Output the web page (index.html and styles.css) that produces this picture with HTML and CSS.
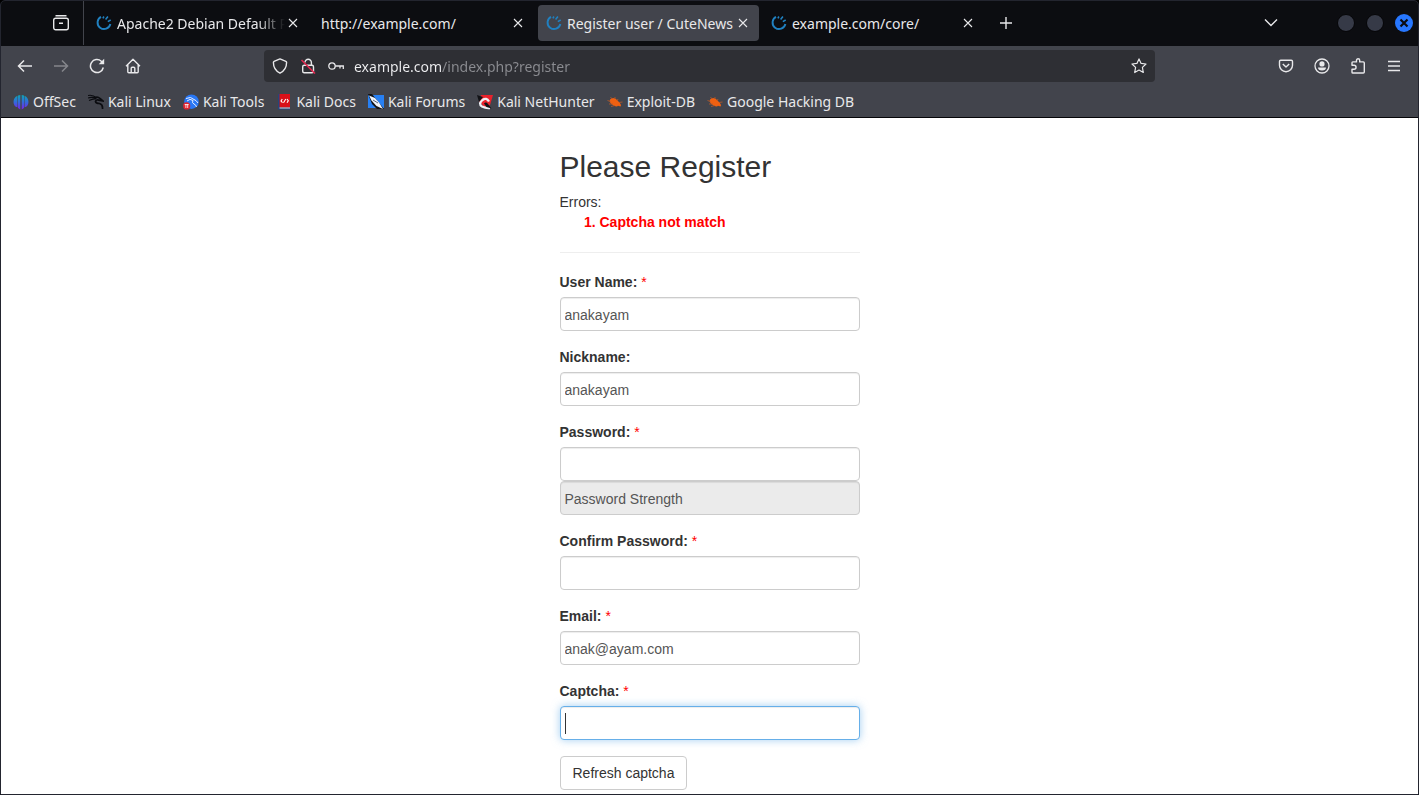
FILE: index.html
```html
<!DOCTYPE html>
<html lang="en">
<head>
  <meta charset="UTF-8">
  <meta name="viewport" content="width=device-width, initial-scale=1.0">
  <title>Register user / CuteNews</title>
  <link rel="stylesheet" href="styles.css">
</head>
<body>
  <svg class="sprites" aria-hidden="true">
    <symbol id="swirl" viewBox="0 0 16 16">
      <path d="M5 1.800A6.500 6.500 0 1 0 14.400 9" fill="none" stroke="#2080c0" stroke-width="1.900"/>
      <path d="M6.900 3.300l1-1.800M9.600 4.500l2.300-2.900M11.800 6.600l2.900-1.600" fill="none" stroke="#2080c0" stroke-width="1.600"/>
    </symbol>
    <symbol id="close" viewBox="0 0 16 16">
      <path d="M4 4l8 8M12 4l-8 8" fill="none" stroke="currentColor" stroke-width="1.1"/>
    </symbol>
    <symbol id="bug" viewBox="0 0 16 16">
      <path d="M3 5.500Q6 2.500 9.500 5.500L12 8Q15 11 13.500 12.500L11 11.800Q10 13.500 6.500 11.500Q1.500 8.500 3 5.500Z" fill="#f06010"/>
      <path d="M.5 6.500l3 1M2 10l4 0M4 12.500l4-1M3.500 3l1.500 2M8 3l0 2M11 5l-1 2M12 8.500l3.500-.5" stroke="#bd5a28" stroke-width=".8"/>
    </symbol>
  </svg>

  <div class="window">
    <header class="browser">
      <div class="tab-bar">
        <button class="icon-btn view-btn" aria-label="Firefox View">
          <svg width="18" height="18" viewBox="0 0 18 18" fill="none" stroke="currentColor" stroke-width="1.4"><path d="M3.500 1.700h11"/><rect x="1.700" y="4.200" width="14.600" height="11.600" rx="2"/><path d="M7 9.300h4"/></svg>
        </button>
        <div class="tabs">
          <div class="tab">
            <svg class="favicon"><use href="#swirl"/></svg>
            <button class="tab-title faded">Apache2 Debian Default P</button>
            <button class="tab-close" aria-label="Close tab"><svg><use href="#close"/></svg></button>
          </div>
          <div class="tab">
            <button class="tab-title">http://example.com/</button>
            <button class="tab-close" aria-label="Close tab"><svg><use href="#close"/></svg></button>
          </div>
          <div class="tab active">
            <svg class="favicon"><use href="#swirl"/></svg>
            <button class="tab-title">Register user / CuteNews</button>
            <button class="tab-close" aria-label="Close tab"><svg><use href="#close"/></svg></button>
          </div>
          <div class="tab">
            <svg class="favicon"><use href="#swirl"/></svg>
            <button class="tab-title">example.com/core/</button>
            <button class="tab-close" aria-label="Close tab"><svg><use href="#close"/></svg></button>
          </div>
        </div>
        <button class="icon-btn" aria-label="New tab">
          <svg width="16" height="16" viewBox="0 0 16 16" stroke="currentColor" stroke-width="1.4"><path d="M8 2v12M2 8h12"/></svg>
        </button>
        <button class="icon-btn list-btn" aria-label="List all tabs">
          <svg width="16" height="16" viewBox="0 0 16 16" fill="none" stroke="currentColor" stroke-width="1.4"><path d="M2 4.500L8 10.500 14 4.500"/></svg>
        </button>
        <div class="window-controls">
          <button class="control" aria-label="Minimize"></button>
          <button class="control" aria-label="Maximize"></button>
          <button class="control control-close" aria-label="Close">
            <svg width="10" height="10" viewBox="0 0 10 10" stroke="#0c0d12" stroke-width="2.200"><path d="M1.500 1.500l7 7M8.500 1.500l-7 7"/></svg>
          </button>
        </div>
      </div>

      <div class="nav-bar">
        <div class="nav-group">
          <button class="icon-btn" aria-label="Back">
            <svg width="16" height="16" viewBox="0 0 16 16" fill="none" stroke="currentColor" stroke-width="1.500"><path d="M15 8H1.800M7 2.500L1.500 8 7 13.500"/></svg>
          </button>
          <button class="icon-btn dim" aria-label="Forward">
            <svg width="16" height="16" viewBox="0 0 16 16" fill="none" stroke="currentColor" stroke-width="1.500"><path d="M1 8h13.200M9 2.500L14.500 8 9 13.500"/></svg>
          </button>
          <button class="icon-btn" aria-label="Reload">
            <svg width="16" height="16" viewBox="0 0 16 16" fill="none" stroke="currentColor" stroke-width="1.500"><path d="M14.300 9.500A6.500 6.500 0 1 1 12.300 3.200L14 5"/><path d="M15.200 .8V6.300H9.700Z" fill="currentColor" stroke="none"/></svg>
          </button>
          <button class="icon-btn" aria-label="Home">
            <svg width="16" height="16" viewBox="0 0 16 16" fill="none" stroke="currentColor" stroke-width="1.400" stroke-linejoin="round"><path d="M1 8.300L8 1.300l7 7M2.800 7v6.700q0 1 1 1h8.400q1 0 1-1V7M6.200 14.500V10.200q0-1 1-1h1.600q1 0 1 1v4.300"/></svg>
          </button>
        </div>
        <div class="url-bar">
          <svg width="16" height="16" viewBox="0 0 16 16" fill="none" stroke="currentColor" stroke-width="1.400" stroke-linejoin="round"><path d="M8 .9L13.900 3.300q.7.300.7 1C14.600 9 12.300 13.100 8 15.200 3.700 13.100 1.400 9 1.400 4.300q0-.7.700-1Z"/></svg>
          <svg width="16" height="16" viewBox="0 0 16 16" fill="none" stroke="currentColor" stroke-width="1.400"><rect x="2.700" y="7.200" width="10.800" height="7.600" rx="1.500"/><path d="M5 4.500a3.200 3.200 0 0 1 6.400 0V7"/><path d="M1.500 2l13.500 13.500" stroke="#e22850" stroke-width="1.600"/></svg>
          <svg width="16" height="16" viewBox="0 0 16 16" fill="none" stroke="currentColor" stroke-width="1.300"><circle cx="4" cy="8" r="3.200"/><path d="M7.200 8H15.300v3M12 8v2.500"/></svg>
          <input class="url" type="text" aria-label="Address" value="example.com/index.php?register">
          <button class="star" aria-label="Bookmark this page">
            <svg width="16" height="16" viewBox="0 0 16 16" fill="none" stroke="currentColor" stroke-width="1.200" stroke-linejoin="round"><path d="M8 .9l2.100 4.500 4.900.6-3.600 3.400.9 5.100L8 12.100l-4.300 2.400.9-5.100L1 6l4.900-.6Z"/></svg>
          </button>
        </div>
        <div class="nav-group">
          <button class="icon-btn" aria-label="Save to Pocket">
            <svg width="16" height="16" viewBox="0 0 16 16" fill="none" stroke="currentColor" stroke-width="1.400" stroke-linejoin="round"><path d="M2.700 2.200h10.600q1.200 0 1.200 1.200V7.200a6.500 6.500 0 0 1-13 0V3.400q0-1.200 1.200-1.200Z"/><path d="M4.800 6L8 9.100 11.200 6"/></svg>
          </button>
          <button class="icon-btn" aria-label="Account">
            <svg width="16" height="16" viewBox="0 0 16 16"><circle cx="8" cy="8" r="7" fill="none" stroke="currentColor" stroke-width="1.300"/><circle cx="8" cy="5.900" r="2.600" fill="currentColor"/><path d="M4 9.500h8q0 3-4 3t-4-3Z" fill="currentColor"/></svg>
          </button>
          <button class="icon-btn" aria-label="Extensions">
            <svg width="16" height="16" viewBox="0 0 16 16" fill="none" stroke="currentColor" stroke-width="1.400" stroke-linejoin="round"><path d="M2 7.200V4.700q0-.8.800-.8H6.500V2.300a1.600 1.600 0 0 1 3.200 0V3.900h3.600q1 0 1 1V14q0 1-1 1H2.800q-.8 0-.8-.8V11.300H4a2 2 0 0 0 0-4.100Z"/></svg>
          </button>
          <button class="icon-btn" aria-label="Menu">
            <svg width="16" height="16" viewBox="0 0 16 16" stroke="currentColor" stroke-width="1.300"><path d="M2 3.500h12M2 8h12M2 12.500h12"/></svg>
          </button>
        </div>
      </div>

      <nav class="bookmarks">
        <a href="#">
          <svg viewBox="0 0 16 16"><defs><linearGradient id="offsec" x2="0" y2="1"><stop stop-color="#0ca5b4"/><stop offset=".5" stop-color="#3468dc"/><stop offset="1" stop-color="#7b20e8"/></linearGradient></defs><path d="M4.500 1.800V13.300C-.8 12 -.8 4 4.500 1.800ZM5 1.500L7.300 1V15.600L5 14ZM8.700 1l2.300.5V14L8.700 15.600ZM11.500 1.800C16.800 4 16.800 12 11.500 13.300Z" fill="url(#offsec)"/></svg>
          OffSec
        </a>
        <a href="#">
          <svg viewBox="0 0 16 16" fill="none" stroke="#0b0c10"><path d="M0 1.500Q5 .5 8.500 4M0 4Q4 2.500 8.500 4.500M1 6.500Q5 4.500 8 5" stroke-width="1.100"/><path d="M7 3.500Q10 2.500 12 4.500L15 7 12 6.500Q8 5 7.500 7.500 8 9.500 11.500 9.500 15 10.500 14.500 15" stroke-width="1.700"/></svg>
          Kali Linux
        </a>
        <a href="#">
          <svg viewBox="0 0 16 16"><circle cx="8.500" cy="7.700" r="7.300" fill="#2877f5"/><path d="M3 4.500Q8 2 11 5.500q2 .5 4 3.500M4 7Q7 4 10 6.500 8.500 9 11 10q2 .8 2.500 3" fill="none" stroke="#e8efff" stroke-width="1"/><circle cx="3.700" cy="11.900" r="3.600" fill="#e02430"/><path d="M1.700 10.600h4M2.900 10v4M4.700 10v4" stroke="#fff" stroke-width=".8"/></svg>
          Kali Tools
        </a>
        <a href="#">
          <svg viewBox="0 0 16 16"><path d="M2 0h12v14H2Z" fill="#d91019"/><path d="M2 0h1.500v13.500H14V15.500H2Z" fill="#25457c"/><path d="M3.500 14h10.500" stroke="#d8d8df"/><path d="M6.300 5L5 7 6.500 8.700M11 5l1.300 1.700L11 8.700M7.500 8.700L9.800 5" fill="none" stroke="#fff" stroke-width="1.100"/></svg>
          Kali Docs
        </a>
        <a href="#">
          <svg viewBox="0 0 16 16"><path d="M0 1h16v13H0Z" fill="#2780f4"/><path d="M0 0h4l12 15H9L4 10Z" fill="#111216"/><path d="M1 1.500l6 2.500 4 4.500 4 6.500-6.500-3-5-5.500Z" fill="#eef3fb"/><path d="M5 6l5 3" stroke="#2d4063" stroke-width=".8"/></svg>
          Kali Forums
        </a>
        <a href="#">
          <svg viewBox="0 0 16 16"><path d="M4 1h12L13 11 8 14 2 7Z" fill="#e9222c"/><path d="M0 1l6 2-4 5Z" fill="#111216"/><path d="M12 7.500Q9.500 3 5.500 6 1 10 5 12.500q4 2 8 1.500" fill="none" stroke="#eef0f4" stroke-width="2.300"/><path d="M7 9.500Q9 7.500 11 10l3.500 4.500-5-1.500Z" fill="#111216"/></svg>
          Kali NetHunter
        </a>
        <a href="#"><svg><use href="#bug"/></svg>Exploit-DB</a>
        <a href="#"><svg><use href="#bug"/></svg>Google Hacking DB</a>
      </nav>
    </header>

    <main class="page">
      <form class="register">
        <h2>Please Register</h2>
        <div>Errors:</div>
        <ol class="errors">
          <li>Captcha not match</li>
        </ol>
        <hr>
        <div class="form-group">
          <label for="regusername">User Name: <span class="required">*</span></label>
          <input type="text" id="regusername" class="form-control" value="anakayam">
        </div>
        <div class="form-group">
          <label for="regnickname">Nickname:</label>
          <input type="text" id="regnickname" class="form-control" value="anakayam">
        </div>
        <div class="form-group">
          <label for="regpassword">Password: <span class="required">*</span></label>
          <input type="password" id="regpassword" class="form-control">
          <input type="text" class="form-control" aria-label="Password Strength" value="Password Strength" disabled>
        </div>
        <div class="form-group">
          <label for="confirm">Confirm Password: <span class="required">*</span></label>
          <input type="password" id="confirm" class="form-control">
        </div>
        <div class="form-group">
          <label for="regemail">Email: <span class="required">*</span></label>
          <input type="text" id="regemail" class="form-control" value="anak@ayam.com">
        </div>
        <div class="form-group">
          <label for="captcha">Captcha: <span class="required">*</span></label>
          <input type="text" id="captcha" class="form-control focused">
        </div>
        <button type="button" class="btn">Refresh captcha</button>
      </form>
    </main>
  </div>
</body>
</html>
```
FILE: styles.css
```css
* {
  box-sizing: border-box;
}
body {
  margin: 0;
  background: #000;
}
button, input {
  font: inherit;
  color: inherit;
}
.sprites {
  position: absolute;
  width: 0;
  height: 0;
}
.window {
  display: flex;
  flex-direction: column;
  height: 100vh;
  border: 1px solid #23252f;
  border-radius: 5px 5px 0 0;
  overflow: hidden;
}

/* Browser chrome */
.browser {
  flex: none;
  background: #42444c;
  border-bottom: 1px solid #060609;
  color: #e8e8ea;
  font: 14px/20px "Noto Sans", sans-serif;
}
.browser svg {
  display: block;
  flex: none;
}
.browser button {
  padding: 0;
  border: 0;
  background: none;
}
.tab-bar {
  display: flex;
  align-items: center;
  height: 45px;
  padding-right: 5px;
  padding-bottom: 1px;
  background: #0c0d11;
}
.browser .icon-btn {
  display: flex;
  align-items: center;
  justify-content: center;
  width: 36px;
  height: 36px;
}
.browser .view-btn {
  width: 83px;
  height: 100%;
  padding-left: 38px;
  border-right: 1px solid #42444c;
}
.tabs {
  display: flex;
  gap: 4px;
  padding: 0 4px;
}
.tab {
  display: flex;
  align-items: center;
  width: 221px;
  height: 36px;
  padding: 0 8px;
  border-radius: 4px;
}
.tab.active {
  background: #42444c;
}
.favicon {
  width: 16px;
  height: 16px;
  margin-right: 5px;
}
.browser .tab-title {
  flex: 1;
  min-width: 0;
  padding-top: 2px;
  overflow: hidden;
  white-space: nowrap;
  text-align: left;
}
.faded {
  mask-image: linear-gradient(to left, transparent, #000 28px);
}
.tab-close svg {
  width: 16px;
  height: 16px;
}
.browser .list-btn {
  margin-left: auto;
  margin-right: 48px;
}
.window-controls {
  display: flex;
  align-items: center;
  gap: 11px;
}
.browser .control {
  display: flex;
  align-items: center;
  justify-content: center;
  width: 18px;
  height: 18px;
  border-radius: 50%;
  border: 1px solid #050507;
  background: #363a47;
}
.browser .control-close {
  border: 0;
  background: #2777ff;
}
.nav-bar {
  display: flex;
  align-items: center;
  height: 40px;
  padding: 0 6px;
}
.nav-group {
  display: flex;
}
.dim {
  opacity: .4;
}
.url-bar {
  display: flex;
  align-items: center;
  gap: 12px;
  flex: 1;
  height: 32px;
  margin: 0 113px;
  padding: 0 8px;
  border-radius: 4px;
  background: #2e2f34;
}
.url {
  flex: 1;
  min-width: 0;
  margin-left: -2px;
  padding: 2px 0 0;
  border: 0;
  outline: 0;
  /* host is bright, the path is dimmed */
  background: linear-gradient(to right, #f0f0f2 87px, #8b8c91 87px);
  background-clip: text;
  -webkit-text-fill-color: transparent;
}
.bookmarks {
  display: flex;
  align-items: center;
  gap: 12px;
  height: 31px;
  padding: 0 12px;
}
.bookmarks a {
  display: flex;
  align-items: center;
  gap: 4px;
  color: inherit;
  text-decoration: none;
  white-space: nowrap;
}
.bookmarks svg {
  width: 16px;
  height: 16px;
}

/* Page */
.page {
  flex: 1;
  min-height: 0;
  overflow: hidden;
  padding-top: 31px;
  background: #fff;
  color: #333;
  font: 14px/20px "Liberation Sans", Arial, sans-serif;
}
.register {
  max-width: 300px;
  margin: 0 auto;
}
h2 {
  margin: 0 0 8px;
  font-size: 30px;
  font-weight: 400;
  line-height: 35px;
}
.errors {
  margin: 0;
  padding-left: 40px;
  color: #f00;
  font-weight: 700;
}
hr {
  margin: 20px 0 19px;
  border: 0;
  border-top: 1px solid #eee;
}
.form-group {
  margin-bottom: 16px;
}
label {
  display: block;
  margin-bottom: 5px;
  font-weight: 700;
}
.required {
  color: #f00;
  font-weight: 400;
}
.form-control {
  display: block;
  width: 100%;
  height: 34px;
  padding: 6px 4px 4px;
  border: 1px solid #ccc;
  border-radius: 4px;
  background: #fff;
  box-shadow: inset 0 1px 1px rgba(0, 0, 0, .075);
  color: #555;
}
.form-control:disabled {
  background: #ebebeb;
}
.form-control.focused {
  border-color: #66afe9;
  outline: 0;
  /* text cursor */
  background: linear-gradient(#333, #333) 4px center / 1px 21px no-repeat #fff;
  box-shadow: inset 0 1px 1px rgba(0, 0, 0, .075), 0 0 8px rgba(102, 175, 233, .6);
}
.btn {
  padding: 6px 12px;
  border: 1px solid #ccc;
  border-radius: 4px;
  background: #fff;
}
```
